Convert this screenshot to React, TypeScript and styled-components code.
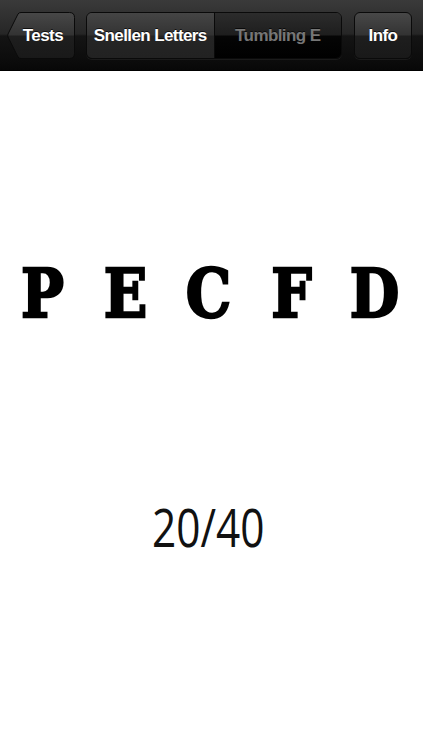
import React from "react";
import styled, { createGlobalStyle, css } from "styled-components";

const Global = createGlobalStyle`
  html, body { margin: 0; padding: 0; background: #ffffff; }
  body { width: 423px; height: 750px; overflow: hidden; }
  #root { width: 423px; height: 750px; }
`;

const Screen = styled.div`
  width: 423px;
  height: 750px;
  display: flex;
  flex-direction: column;
  background: #ffffff;
`;

const NavBar = styled.div`
  height: 71px;
  box-sizing: border-box;
  display: flex;
  align-items: flex-start;
  padding: 12px 11px 0 7px;
  gap: 11px;
  background: linear-gradient(
    to bottom,
    #3a3a3a 0px,
    #262626 34px,
    #141414 36px,
    #0c0c0c 60px,
    #070707 71px
  );
  border-bottom: 1px solid #000;
  font-family: "Liberation Sans", Arial, Helvetica, sans-serif;
`;

const gloss = css`
  background: linear-gradient(
    to bottom,
    #484848 0%,
    #333333 48%,
    #1e1e1e 52%,
    #191919 100%
  );
`;

const Label = styled.span<{ $dim?: boolean }>`
  position: relative;
  font-size: 17px;
  font-weight: bold;
  letter-spacing: -0.6px;
  color: ${(p) => (p.$dim ? "#767676" : "#ffffff")};
  text-shadow: 0 -1px 0 rgba(0, 0, 0, 0.7);
  white-space: nowrap;
`;

const BackButton = styled.div`
  position: relative;
  width: 68px;
  height: 47px;
  flex: none;
  display: flex;
  align-items: center;
  justify-content: flex-end;
  padding-right: 12px;
  box-sizing: border-box;
`;

const BackShape = styled.svg`
  position: absolute;
  inset: 0;
  width: 68px;
  height: 47px;
`;

const Segmented = styled.div`
  flex: none;
  width: 256px;
  height: 47px;
  display: flex;
  border: 1px solid #0a0a0a;
  border-radius: 6px;
  box-sizing: border-box;
  overflow: hidden;
  box-shadow: 0 1px 0 rgba(255, 255, 255, 0.06);
`;

const Segment = styled.div<{ $active?: boolean }>`
  flex: 1;
  display: flex;
  align-items: center;
  justify-content: center;
  ${(p) =>
    p.$active
      ? css`
          background: linear-gradient(
            to bottom,
            #454545 0%,
            #333333 48%,
            #252525 52%,
            #222222 100%
          );
        `
      : css`
          background: linear-gradient(
            to bottom,
            #2c2c2c 0%,
            #1e1e1e 48%,
            #050505 52%,
            #000000 100%
          );
        `}
  & + & {
    border-left: 1px solid #0a0a0a;
  }
`;

const InfoButton = styled.div`
  flex: none;
  margin-left: auto;
  width: 58px;
  height: 47px;
  box-sizing: border-box;
  border: 1px solid #0a0a0a;
  border-radius: 6px;
  display: flex;
  align-items: center;
  justify-content: center;
  ${gloss}
  box-shadow: 0 1px 0 rgba(255, 255, 255, 0.06);
`;

const Chart = styled.div`
  flex: 1;
  display: flex;
  flex-direction: column;
  align-items: stretch;
`;

const LetterRow = styled.div`
  display: flex;
  padding-top: 175px;
  padding-left: 1px;
  height: 95px;
  align-items: center;
`;

const Letter = styled.span`
  width: 83px;
  display: inline-block;
  text-align: center;
  font-family: "DejaVu Serif", "Liberation Serif", serif;
  font-weight: 700;
  font-size: 68px;
  line-height: 95px;
  color: #000;
  -webkit-text-stroke: 2.5px #000;
  transform: scaleX(0.84);
`;

const Acuity = styled.div`
  margin-top: 156px;
  display: flex;
  justify-content: center;
`;

const AcuityText = styled.span`
  display: inline-block;
  font-family: "Open Sans", "Noto Sans", sans-serif;
  font-size: 53px;
  line-height: 60px;
  color: #111;
  transform: scaleX(0.8);
  margin-left: -6px;
`;

export default function App() {
  const letters = ["P", "E", "C", "F", "D"];
  return (
    <>
      <Global />
      <Screen>
        <NavBar>
          <BackButton>
            <BackShape viewBox="0 0 68 47">
              <defs>
                <linearGradient id="bk" x1="0" y1="0" x2="0" y2="1">
                  <stop offset="0" stopColor="#484848" />
                  <stop offset="0.48" stopColor="#333333" />
                  <stop offset="0.52" stopColor="#1e1e1e" />
                  <stop offset="1" stopColor="#191919" />
                </linearGradient>
              </defs>
              <path
                d="M14 0.5 L62.5 0.5 Q67.5 0.5 67.5 5.5 L67.5 41.5 Q67.5 46.5 62.5 46.5 L14 46.5 Q12 46.5 11 45 L1 25 Q0.4 23.5 1 22 L11 2 Q12 0.5 14 0.5 Z"
                fill="url(#bk)"
                stroke="#0a0a0a"
                strokeWidth="1"
              />
            </BackShape>
            <Label>Tests</Label>
          </BackButton>
          <Segmented>
            <Segment $active>
              <Label>Snellen Letters</Label>
            </Segment>
            <Segment>
              <Label $dim>Tumbling E</Label>
            </Segment>
          </Segmented>
          <InfoButton>
            <Label>Info</Label>
          </InfoButton>
        </NavBar>
        <Chart>
          <LetterRow>
            {letters.map((l) => (
              <Letter key={l}>{l}</Letter>
            ))}
          </LetterRow>
          <Acuity>
            <AcuityText>20/40</AcuityText>
          </Acuity>
        </Chart>
      </Screen>
    </>
  );
}
